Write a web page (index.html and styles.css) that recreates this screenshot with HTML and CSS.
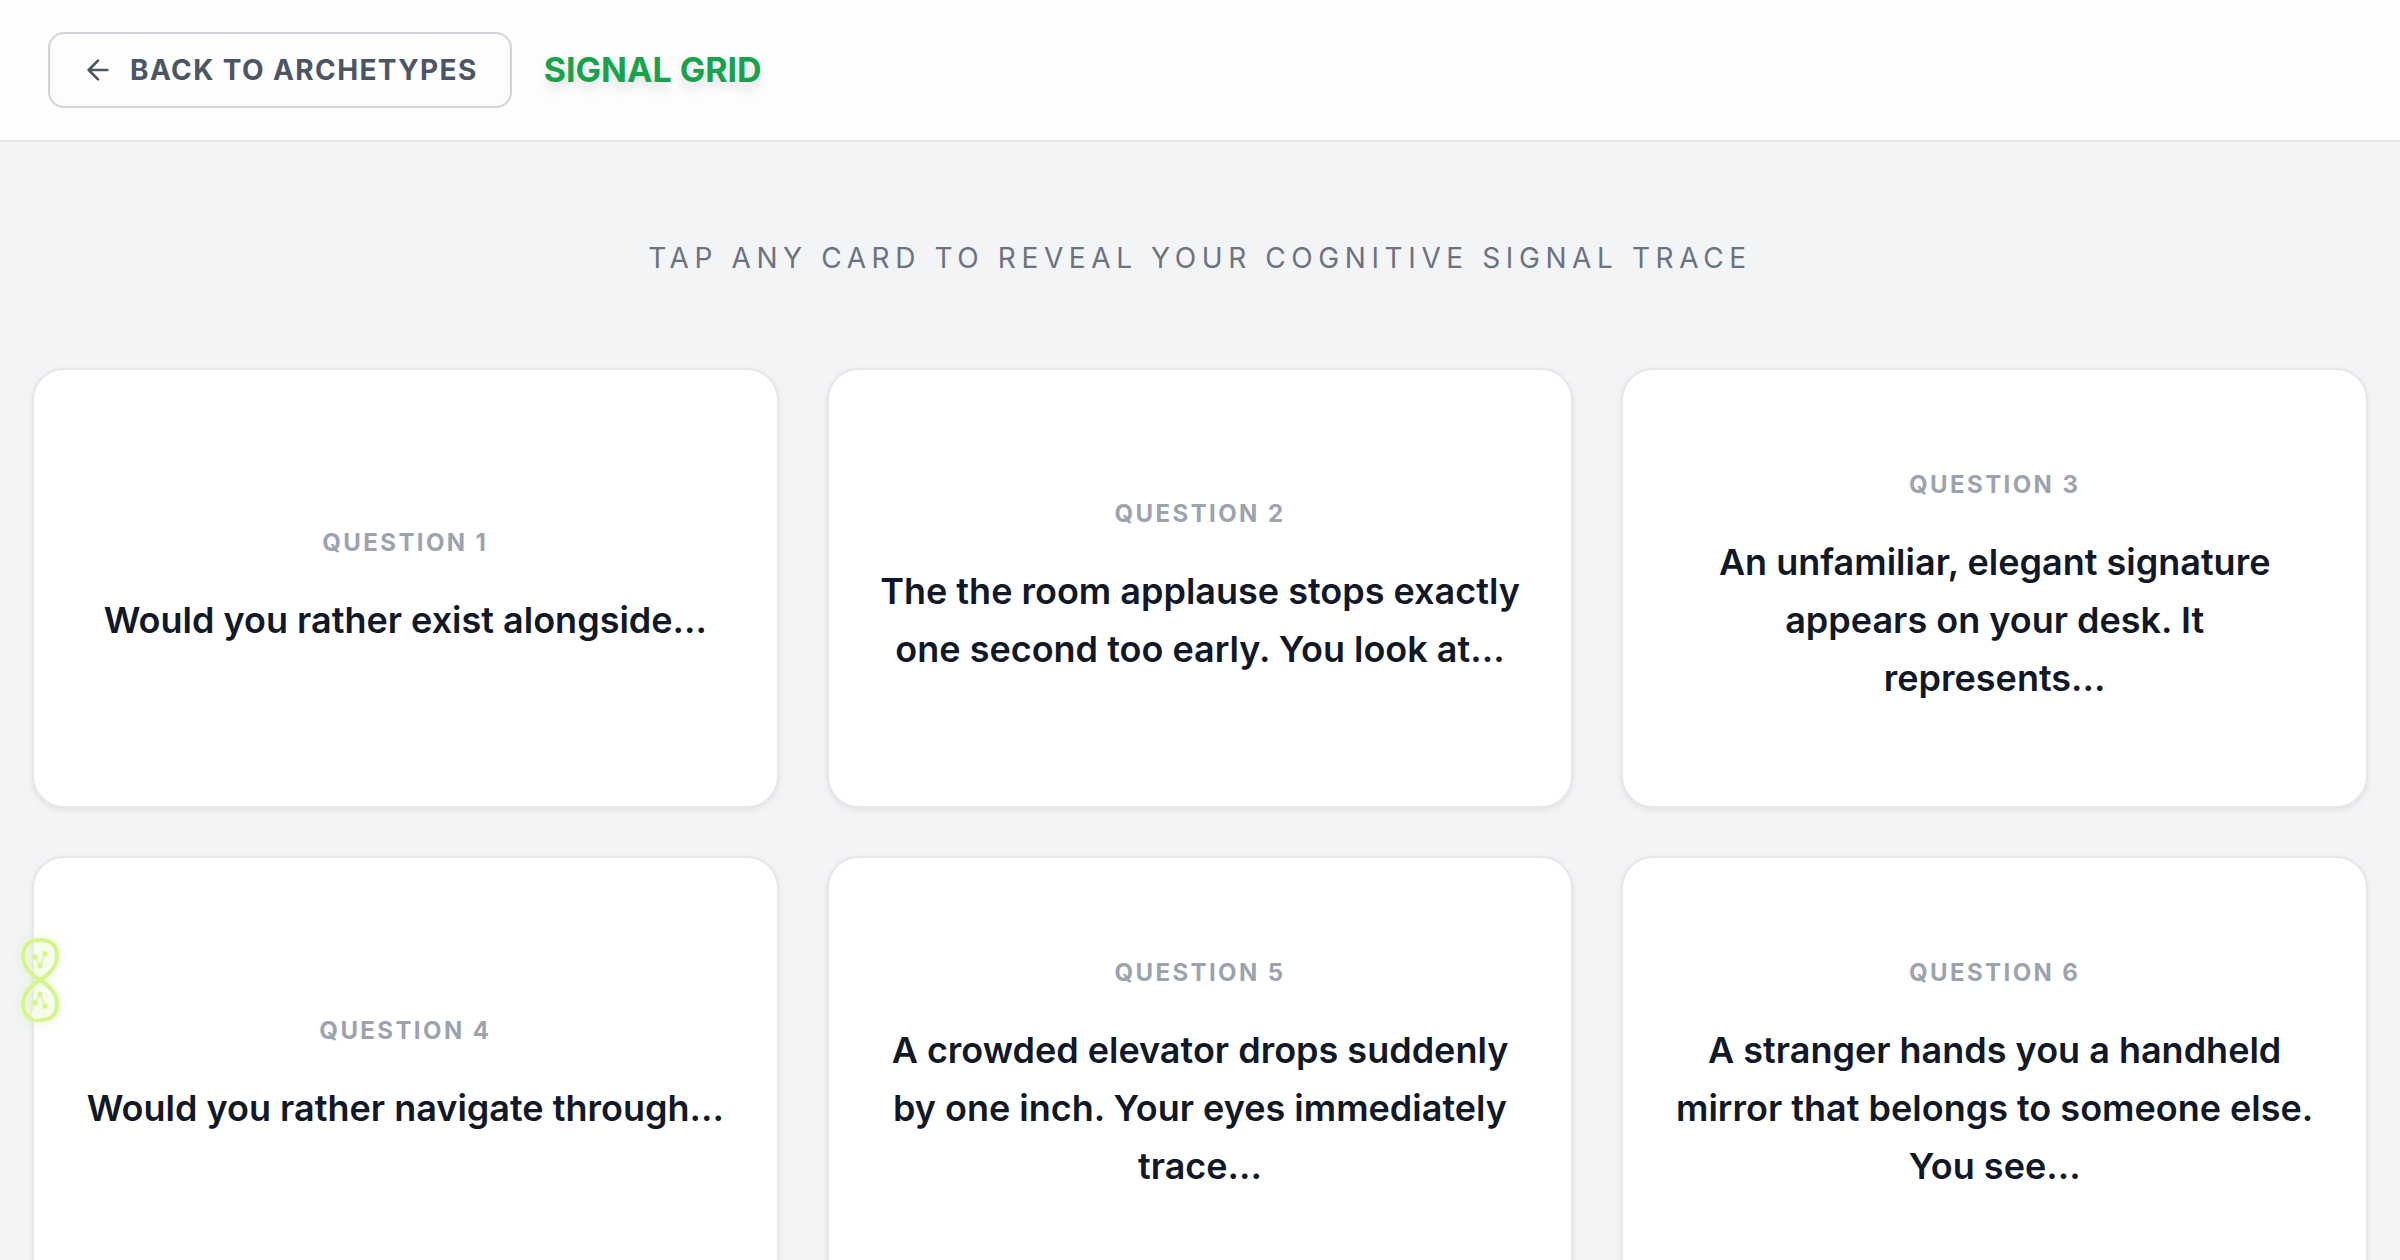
FILE: index.html
```html
<!DOCTYPE html>
<html lang="en">
<head>
    <meta charset="UTF-8"/>
    <meta name="viewport" content="width=device-width, initial-scale=1.0"/>
    <title>Signal Grid</title>
    <link rel="stylesheet" href="styles.css">
</head>
<body>
    <header class="topbar">
        <button type="button" class="back-button">
            <svg class="back-icon" viewBox="0 0 24 24" aria-hidden="true">
                <path d="M12 19l-7-7 7-7M19 12H5"/>
            </svg>
            Back to Archetypes
        </button>
        <h1 class="title">Signal Grid</h1>
    </header>

    <main class="content">
        <p class="hint">Tap any card to reveal your cognitive signal trace</p>

        <div class="card-grid">
            <button type="button" class="card">
                <span class="card-label">Question 1</span>
                <span class="card-text">Would you rather exist alongside...</span>
            </button>
            <button type="button" class="card">
                <span class="card-label">Question 2</span>
                <span class="card-text">The the room applause stops exactly one second too early. You look at...</span>
            </button>
            <button type="button" class="card">
                <span class="card-label">Question 3</span>
                <span class="card-text">An unfamiliar, elegant signature appears on your desk. It represents...</span>
            </button>
            <button type="button" class="card">
                <span class="card-label">Question 4</span>
                <span class="card-text">Would you rather navigate through...</span>
            </button>
            <button type="button" class="card">
                <span class="card-label">Question 5</span>
                <span class="card-text">A crowded elevator drops suddenly by one inch. Your eyes immediately trace...</span>
            </button>
            <button type="button" class="card">
                <span class="card-label">Question 6</span>
                <span class="card-text">A stranger hands you a handheld mirror that belongs to someone else. You see...</span>
            </button>
        </div>
    </main>

    <!-- floating figure-eight badge -->
    <svg class="loop-badge" viewBox="0 0 60 110" aria-hidden="true">
        <path class="loop" d="M30 55C22 50 13 42 13 31C13 19 20 15 30 15C40 15 47 19 47 31C47 42 38 50 30 55C22 60 13 68 13 79C13 91 20 95 30 95C40 95 47 91 47 79C47 68 38 60 30 55Z"/>
        <path class="link" d="M25 32L30 41L35 29M25 78L30 69L35 81"/>
        <g class="node">
            <circle cx="25" cy="32" r="2.8"/>
            <circle cx="35" cy="29" r="2.8"/>
            <circle cx="30" cy="41" r="2.5"/>
            <circle cx="30" cy="69" r="2.5"/>
            <circle cx="25" cy="78" r="2.8"/>
            <circle cx="35" cy="81" r="2.8"/>
        </g>
        <circle class="spark" cx="27" cy="89" r="5.5"/>
    </svg>
</body>
</html>
```
FILE: styles.css
```css
* {
    box-sizing: border-box;
}

body {
    margin: 0;
    background: #f3f4f6;
    color: #111827;
    font-family: Inter, sans-serif;
}

button {
    font-family: inherit;
    cursor: pointer;
}

.topbar {
    display: flex;
    align-items: center;
    gap: 32px;
    padding: 32px 48px;
    background: #fdfdfd;
    border-bottom: 2px solid #e5e7eb;
}

.back-button {
    display: flex;
    align-items: center;
    gap: 16px;
    padding: 16px 32px;
    background: transparent;
    border: 2px solid #d1d5db;
    border-radius: 16px;
    color: #4b5563;
    font-size: 28px;
    font-weight: 700;
    line-height: 40px;
    letter-spacing: 0.05em;
    text-transform: uppercase;
}

.back-icon {
    width: 32px;
    height: 32px;
    fill: none;
    stroke: currentColor;
    stroke-width: 2;
    stroke-linecap: round;
    stroke-linejoin: round;
}

.title {
    margin: 0;
    color: #16a34a;
    font-size: 34px;
    font-weight: 700;
    line-height: 56px;
    text-transform: uppercase;
    text-shadow: 0 8px 8px rgba(0, 0, 0, 0.1);
}

.content {
    padding: 96px 32px;
}

.hint {
    margin: 0 0 90px;
    color: #6b7280;
    font-size: 28px;
    line-height: 40px;
    letter-spacing: 0.2em;
    text-align: center;
    text-transform: uppercase;
}

.card-grid {
    display: grid;
    grid-template-columns: repeat(3, 1fr);
    gap: 48px;
}

.card {
    display: flex;
    flex-direction: column;
    align-items: center;
    justify-content: center;
    gap: 32px;
    min-height: 440px;
    padding: 48px;
    background: #fff;
    border: 2px solid #e5e7eb;
    border-radius: 32px;
    box-shadow: 0 2px 6px rgba(0, 0, 0, 0.08);
    color: #111827;
}

.card-label {
    color: #9ca3af;
    font-size: 24px;
    font-weight: 700;
    line-height: 32px;
    letter-spacing: 0.1em;
    text-transform: uppercase;
}

.card-text {
    font-size: 36px;
    font-weight: 600;
    line-height: 58px;
    text-align: center;
}

.loop-badge {
    position: fixed;
    left: 10px;
    top: 925px;
    width: 60px;
    height: 110px;
    filter: drop-shadow(0 0 6px rgba(190, 242, 100, 0.4));
}

.loop {
    fill: rgba(255, 255, 255, 0.2);
    stroke: #d4f58c;
    stroke-width: 4;
}

.link {
    fill: none;
    stroke: #def5b4;
    stroke-width: 2;
}

.node {
    fill: #d4f58c;
}

.spark {
    fill: #f6fbec;
}
```
